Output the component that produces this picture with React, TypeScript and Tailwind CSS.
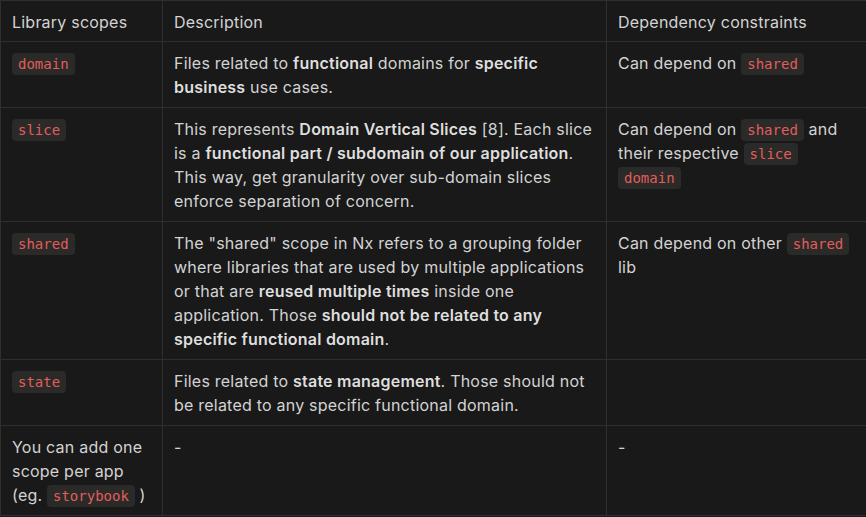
import React from 'react';

const Code = ({ children }: { children: React.ReactNode }) => (
  <code className="rounded-[4px] bg-[#2a2a29] px-[6px] py-[3px] font-['DejaVu_Sans_Mono',monospace] text-[14px] leading-none tracking-normal text-[#e35d5b]">
    {children}
  </code>
);

const B = ({ children }: { children: React.ReactNode }) => (
  <strong className="font-semibold text-[#dedede]">{children}</strong>
);

const cell = 'border border-[#2f2f2f] px-[11px] pt-[9px] pb-[8px] align-top';
const head = 'border border-[#2f2f2f] px-[11px] pt-[9px] pb-[7px] align-top text-left font-normal';

export default function App() {
  return (
    <div className="min-h-screen bg-[#191919] font-['Inter',sans-serif] text-[16px] leading-[24px] tracking-[0.22px] text-[#d3d3d3]">
      <table className="w-[867px] table-fixed border-collapse">
        <colgroup>
          <col className="w-[162px]" />
          <col className="w-[444px]" />
          <col className="w-[261px]" />
        </colgroup>
        <thead>
          <tr>
            <th className={head}>Library scopes</th>
            <th className={head}>Description</th>
            <th className={head}>Dependency constraints</th>
          </tr>
        </thead>
        <tbody>
          <tr>
            <td className={cell}>
              <Code>domain</Code>
            </td>
            <td className={cell}>
              Files related to <B>functional</B> domains for <B>specific business</B> use cases.
            </td>
            <td className={cell}>
              Can depend on <Code>shared</Code>
            </td>
          </tr>
          <tr>
            <td className={cell}>
              <Code>slice</Code>
            </td>
            <td className={cell}>
              This represents <B>Domain Vertical Slices</B> [8]. Each slice is a{' '}
              <B>functional part / subdomain of our application</B>. This way, get granularity over
              sub-domain slices enforce separation of concern.
            </td>
            <td className={cell}>
              Can depend on <Code>shared</Code> and their respective <Code>slice</Code>{' '}
              <Code>domain</Code>
            </td>
          </tr>
          <tr>
            <td className={cell}>
              <Code>shared</Code>
            </td>
            <td className={cell}>
              The "shared" scope in Nx refers to a grouping folder where libraries that are used by
              multiple applications or that are <B>reused multiple times</B> inside one application.
              Those <B>should not be related to any specific functional domain</B>.
            </td>
            <td className={cell}>
              Can depend on other <Code>shared</Code> lib
            </td>
          </tr>
          <tr>
            <td className={cell}>
              <Code>state</Code>
            </td>
            <td className={cell}>
              Files related to <B>state management</B>. Those should not be related to any specific
              functional domain.
            </td>
            <td className={cell}></td>
          </tr>
          <tr>
            <td className={cell}>
              You can add one scope per app (eg. <Code>storybook</Code> )
            </td>
            <td className={cell}>-</td>
            <td className={cell}>-</td>
          </tr>
        </tbody>
      </table>
    </div>
  );
}
